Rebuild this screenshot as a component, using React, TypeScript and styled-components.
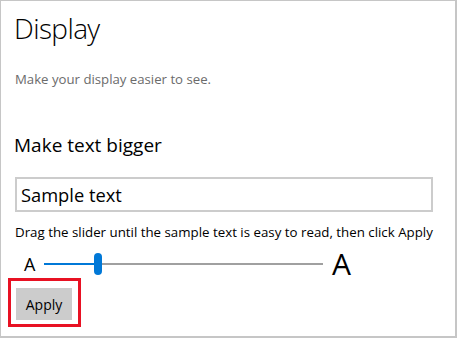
import React from "react";
import styled, { createGlobalStyle } from "styled-components";

const Global = createGlobalStyle`
  html, body { margin: 0; padding: 0; background: #ffffff; }
  body { font-family: "Open Sans", "Noto Sans", sans-serif; }
`;

const Frame = styled.div`
  box-sizing: border-box;
  width: 457px;
  height: 338px;
  border: 1px solid #c6c6c6;
  border-right-width: 2px;
  border-bottom-width: 2px;
  padding: 9px 0 0 13px;
  display: flex;
  flex-direction: column;
  background: #fff;
`;

const Title = styled.h1`
  margin: 0;
  font-size: 28px;
  font-weight: 300;
  line-height: 36px;
  color: #000;
  letter-spacing: -0.6px;
`;

const Subtitle = styled.p`
  margin: 24px 0 0 1px;
  font-size: 13.2px;
  line-height: 18px;
  color: #6b6b6b;
`;

const Heading = styled.h2`
  margin: 45px 0 0 0;
  font-size: 19px;
  font-weight: 400;
  line-height: 24px;
  color: #000;
`;

const SampleBox = styled.div`
  box-sizing: border-box;
  margin: 20px 0 0 1px;
  width: 418px;
  height: 35px;
  border: 2px solid #cccccc;
  padding: 0 0 0 4px;
  display: flex;
  align-items: center;
  font-size: 18.3px;
  color: #000;
`;

const Hint = styled.p`
  margin: 11px 0 0 1px;
  font-size: 13.3px;
  line-height: 18px;
  color: #000;
`;

const SliderRow = styled.div`
  display: flex;
  align-items: center;
  margin: 9px 0 0 10px;
  height: 28px;
`;

const SmallA = styled.span`
  font-size: 18px;
  line-height: 18px;
  color: #000;
  width: 20px;
`;

const Track = styled.div`
  width: 279px;
  height: 22px;
  display: flex;
  align-items: center;
`;

const Fill = styled.div`
  height: 2px;
  background: #0078d7;
`;

const Rest = styled.div`
  flex: 1;
  height: 2px;
  background: #a0a0a0;
`;

const Thumb = styled.div`
  width: 8px;
  height: 22px;
  border-radius: 4px;
  background: #0078d7;
`;

const BigA = styled.span`
  margin-left: 9px;
  font-size: 30px;
  line-height: 28px;
  color: #000;
`;

const Highlight = styled.div`
  align-self: flex-start;
  margin: 0 0 0 -6px;
  border: 3px solid #e81123;
  padding: 7px 6px 4px 5px;
`;

const ApplyButton = styled.button`
  width: 56px;
  height: 32px;
  border: none;
  background: #cccccc;
  font-family: inherit;
  font-size: 14px;
  color: #000;
  padding: 0;
`;

export default function App() {
  const fillWidth = 50;
  return (
    <>
      <Global />
      <Frame>
        <Title>Display</Title>
        <Subtitle>Make your display easier to see.</Subtitle>
        <Heading>Make text bigger</Heading>
        <SampleBox>Sample text</SampleBox>
        <Hint>Drag the slider until the sample text is easy to read, then click Apply</Hint>
        <SliderRow>
          <SmallA>A</SmallA>
          <Track>
            <Fill style={{ width: fillWidth }} />
            <Thumb />
            <Rest />
          </Track>
          <BigA>A</BigA>
        </SliderRow>
        <Highlight>
          <ApplyButton>Apply</ApplyButton>
        </Highlight>
      </Frame>
    </>
  );
}
